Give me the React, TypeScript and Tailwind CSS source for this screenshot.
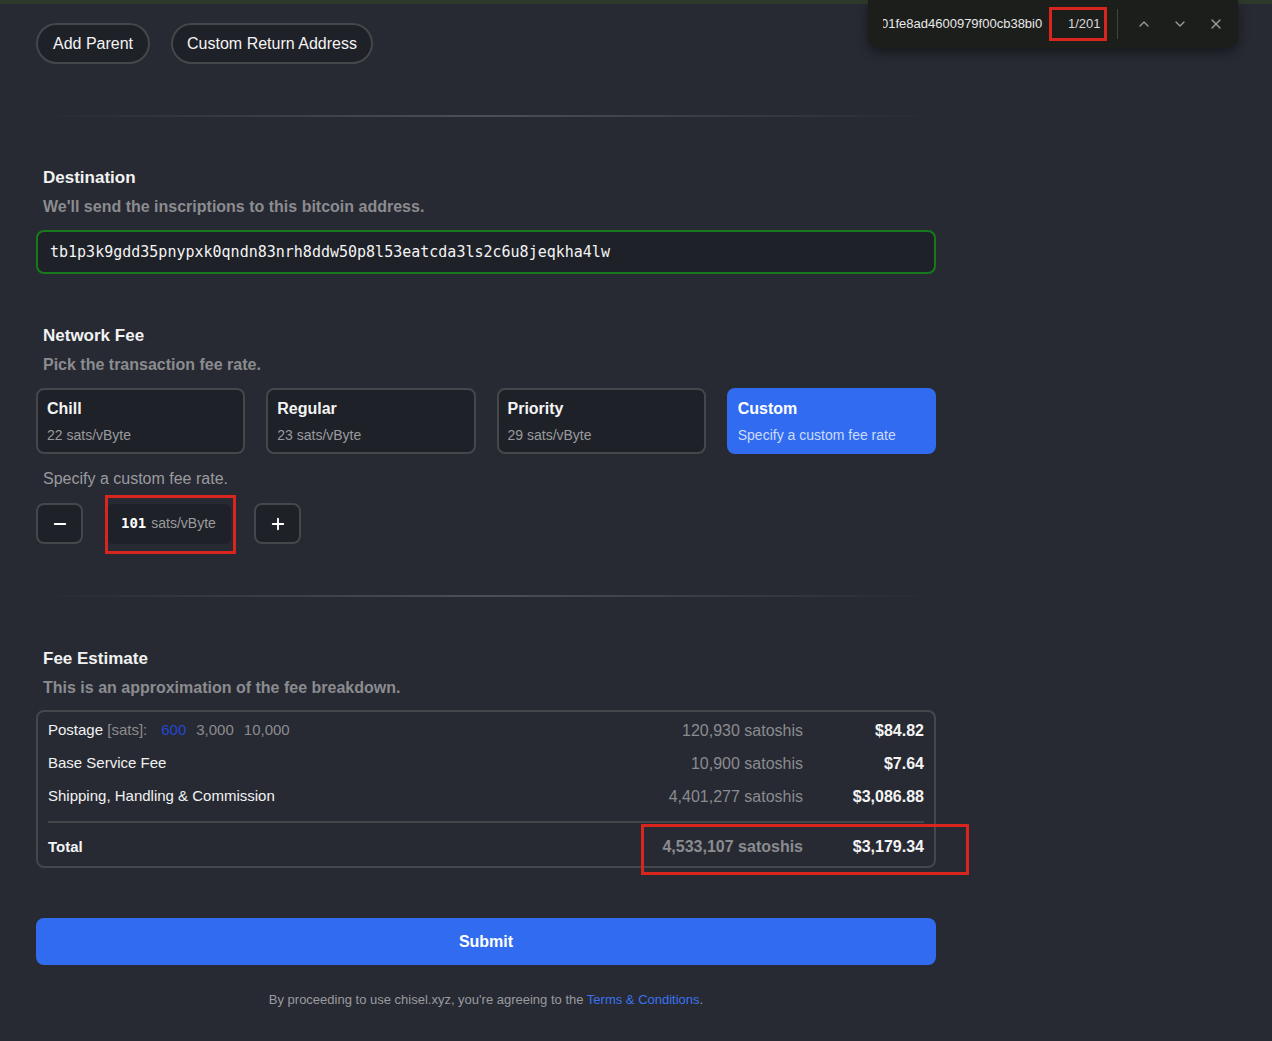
import { ChevronDown, ChevronUp, Minus, Plus, X } from "lucide-react";

const sans = { fontFamily: '"Liberation Sans", Arial, sans-serif' };

function Divider({ className }: { className?: string }) {
  return (
    <div
      className={`h-[2px] w-full bg-gradient-to-r from-transparent via-[#4d4f55] to-transparent ${className ?? ""}`}
    />
  );
}

function SectionHeader({ title, subtitle, className }: { title: string; subtitle: string; className?: string }) {
  return (
    <div className={`pl-[7px] ${className ?? ""}`}>
      <h2 className="text-[17px] font-bold leading-6 text-[#f2f2f2]">{title}</h2>
      <p className="mt-[5px] text-[16px] font-semibold leading-6 text-[#8b8c8f]">{subtitle}</p>
    </div>
  );
}

const fees = [
  { name: "Chill", rate: "22 sats/vByte" },
  { name: "Regular", rate: "23 sats/vByte" },
  { name: "Priority", rate: "29 sats/vByte" },
];

function FeeCard({ name, rate }: { name: string; rate: string }) {
  return (
    <div className="flex h-[66px] flex-col rounded-lg border-2 border-[#45474b] bg-[#1f2128] pl-[9px] pt-[9px]">
      <span className="text-[16px] font-bold leading-5 text-[#f4f4f4]">{name}</span>
      <span className="mt-[6px] text-[14px] leading-5 text-[#9a9b9e]">{rate}</span>
    </div>
  );
}

function Row({ label, sats, usd }: { label: React.ReactNode; sats: string; usd: string }) {
  return (
    <div className="flex h-[33px] items-center text-[15px]">
      <div className="flex-1 text-[#f2f2f2]">{label}</div>
      <div className="text-[16px] text-[#8b8c8f]">{sats}</div>
      <div className="w-[121px] text-right text-[16px] font-semibold text-[#f4f4f4]">{usd}</div>
    </div>
  );
}

function FindBar() {
  return (
    <div className="absolute left-[868px] top-0 flex h-[48px] w-[370px] items-center rounded-b-xl bg-[#1c1e1c] shadow-[0_4px_12px_rgba(0,0,0,0.45)]">
      <div className="ml-[15px] w-[168px] overflow-hidden whitespace-nowrap text-[13px] text-[#e8e8e8]">
        <span className="-ml-[2px]">01fe8ad4600979f00cb38bi0</span>
      </div>
      <span className="ml-[17px] text-[13px] text-[#d8d8d8]">1/201</span>
      <div className="ml-[16px] h-[30px] w-px bg-[#3c463a]" />
      <ChevronUp className="ml-[18px] h-[16px] w-[16px] text-[#9b9b9b]" strokeWidth={2} />
      <ChevronDown className="ml-[20px] h-[16px] w-[16px] text-[#9b9b9b]" strokeWidth={2} />
      <X className="ml-[20px] h-[16px] w-[16px] text-[#9b9b9b]" strokeWidth={2} />
    </div>
  );
}

export default function App() {
  return (
    <div className="relative min-h-[1041px] w-full overflow-hidden bg-[#272a33]" style={sans}>
      <div className="h-[4px] w-full bg-[#2d3a2a]" />

      <div className="ml-[36px] w-[900px]">
        <div className="mt-[19px] flex gap-[21px]">
          <button className="h-[41px] rounded-full border-2 border-[#45474b] bg-[#1f2128] px-[15px] text-[16px] text-[#f4f4f4]">
            Add Parent
          </button>
          <button className="h-[41px] rounded-full border-2 border-[#45474b] bg-[#1f2128] px-[14px] text-[16px] text-[#f4f4f4]">
            Custom Return Address
          </button>
        </div>

        <Divider className="mt-[51px]" />

        <SectionHeader
          className="mt-[49px]"
          title="Destination"
          subtitle="We'll send the inscriptions to this bitcoin address."
        />
        <div className="mt-[11px] flex h-[44px] items-center rounded-lg border-2 border-[#167a1c] bg-[#1f2128] pl-[12px]">
          <span className="text-[15px] text-[#f4f4f4]" style={{ fontFamily: '"DejaVu Sans Mono", monospace' }}>
            tb1p3k9gdd35pnypxk0qndn83nrh8ddw50p8l53eatcda3ls2c6u8jeqkha4lw
          </span>
        </div>

        <SectionHeader className="mt-[50px]" title="Network Fee" subtitle="Pick the transaction fee rate." />
        <div className="mt-[11px] grid grid-cols-4 gap-[21px]">
          {fees.map((f) => (
            <FeeCard key={f.name} {...f} />
          ))}
          <div className="flex h-[66px] flex-col rounded-lg bg-[#316cf0] pl-[11px] pt-[11px]">
            <span className="text-[16px] font-bold leading-5 text-white">Custom</span>
            <span className="mt-[6px] text-[14px] leading-5 text-[#cddbfb]">Specify a custom fee rate</span>
          </div>
        </div>

        <p className="mt-[13px] pl-[7px] text-[16px] leading-6 text-[#9a9b9e]">Specify a custom fee rate.</p>
        <div className="mt-[12px] flex items-center">
          <button className="flex h-[41px] w-[47px] items-center justify-center rounded-lg border-2 border-[#45474b] bg-[#1f2128] text-white">
            <Minus className="h-[18px] w-[18px]" strokeWidth={2.5} />
          </button>
          <div className="ml-[24px] flex h-[40px] w-[124px] items-center rounded-md bg-[#1f2128] pl-[14px]">
            <span className="text-[14px] font-bold text-white" style={{ fontFamily: '"DejaVu Sans Mono", monospace' }}>
              101
            </span>
            <span className="ml-[5px] text-[14px] text-[#9a9b9e]">sats/vByte</span>
          </div>
          <button className="ml-[23px] flex h-[41px] w-[47px] items-center justify-center rounded-lg border-2 border-[#45474b] bg-[#1f2128] text-white">
            <Plus className="h-[18px] w-[18px]" strokeWidth={2.5} />
          </button>
        </div>

        <Divider className="mt-[51px]" />

        <SectionHeader
          className="mt-[50px]"
          title="Fee Estimate"
          subtitle="This is an approximation of the fee breakdown."
        />
        <div className="mt-[10px] rounded-lg border-2 border-[#45474b] px-[10px] pt-[2px] pb-[2px]">
          <Row
            label={
              <span>
                Postage <span className="text-[#8b8c8f]">[sats]:</span>
                <span className="ml-[14px] text-[#2447d0]">600</span>
                <span className="ml-[10px] text-[#8b8c8f]">3,000</span>
                <span className="ml-[10px] text-[#8b8c8f]">10,000</span>
              </span>
            }
            sats="120,930 satoshis"
            usd="$84.82"
          />
          <Row label="Base Service Fee" sats="10,900 satoshis" usd="$7.64" />
          <Row label="Shipping, Handling & Commission" sats="4,401,277 satoshis" usd="$3,086.88" />
          <div className="mt-[8px] h-[2px] bg-[#45474b]" />
          <div className="mt-[7px] flex h-[34px] items-center">
            <div className="flex-1 text-[15px] font-bold text-[#f4f4f4]">Total</div>
            <div className="text-[16px] font-bold text-[#8b8c8f]">4,533,107 satoshis</div>
            <div className="w-[121px] text-right text-[16px] font-bold text-[#f4f4f4]">$3,179.34</div>
          </div>
        </div>

        <button className="mt-[50px] h-[47px] w-full rounded-lg bg-[#316cf0] text-[16px] font-bold text-white">
          Submit
        </button>

        <p className="mt-[25px] text-center text-[13px] text-[#9a9b9e]">
          By proceeding to use chisel.xyz, you&apos;re agreeing to the{" "}
          <span className="text-[#3b73f0]">Terms &amp; Conditions</span>.
        </p>
      </div>

      <FindBar />

      {/* red annotation boxes */}
      <div className="pointer-events-none absolute left-[1049px] top-[7px] h-[34px] w-[58px] border-[3px] border-[#d8261e]" />
      <div className="pointer-events-none absolute left-[105px] top-[495px] h-[59px] w-[131px] border-[3px] border-[#d8261e]" />
      <div className="pointer-events-none absolute left-[641px] top-[824px] h-[51px] w-[328px] border-[3px] border-[#d8261e]" />
    </div>
  );
}
